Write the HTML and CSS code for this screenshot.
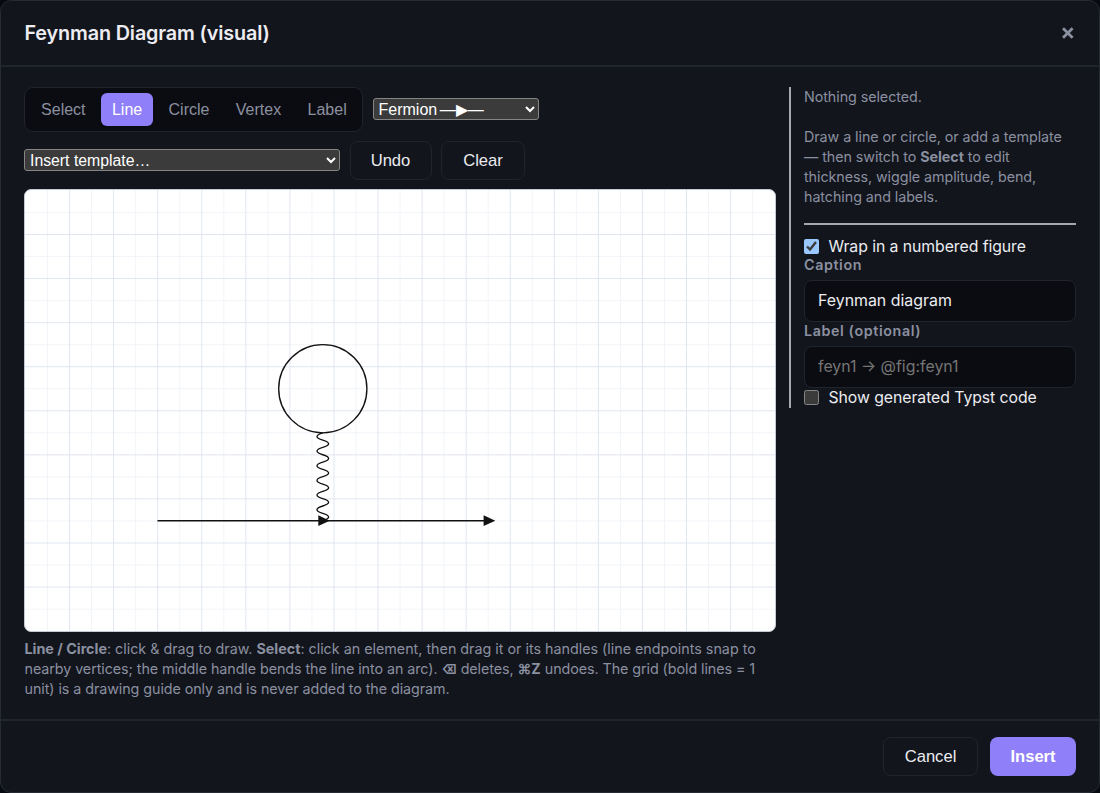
FILE: index.html
```html
<!DOCTYPE html>
<html lang="en">

<head>
    <meta charset="UTF-8">
    <meta name="viewport" content="width=device-width, initial-scale=1.0">
    <link rel="stylesheet" href="styles.css">
    <title>Feynman Diagram (visual)</title>
</head>

<body>
    <div class="modal">
        <header class="modal-header">
            <h2>Feynman Diagram (visual)</h2>
            <button class="close" aria-label="Close">
                <svg width="14" height="14" viewBox="0 0 14 14"><path d="M2 2.2L11.6 11.8M11.6 2.2L2 11.8"/></svg>
            </button>
        </header>

        <div class="modal-body">
            <div class="editor">
                <div class="toolbar">
                    <div class="tools">
                        <button class="tool">Select</button>
                        <button class="tool active">Line</button>
                        <button class="tool">Circle</button>
                        <button class="tool">Vertex</button>
                        <button class="tool">Label</button>
                    </div>
                    <select class="line-type">
                        <option>Fermion —▶—</option>
                    </select>
                </div>
                <div class="toolbar toolbar2">
                    <select class="template">
                        <option>Insert template…</option>
                    </select>
                    <button class="btn undo">Undo</button>
                    <button class="btn clear">Clear</button>
                </div>

                <svg class="canvas" viewBox="25 190 750 441">
                    <g id="grid"></g>
                    <circle class="ink" cx="322.8" cy="388.7" r="44.1"/>
                    <path class="ink" d="M322.8 432.8q-11.6 3.66 0 7.32t0 7.32t0 7.32t0 7.32t0 7.32t0 7.32t0 7.32t0 7.32t0 7.32t0 7.32t0 7.32t0 7.32"/>
                    <path class="ink" d="M157.5 520.7H490"/>
                    <path class="arrow" d="M318.3 515.3L329.7 520.7L318.3 526.1ZM483.6 515.3L495.3 520.7L483.6 526.1Z"/>
                </svg>

                <p class="hint">
                    <span class="first"><b>Line / Circle</b>: click &amp; drag to draw. <b>Select</b>: click an element, then drag it or its handles (line endpoints snap to</span><br>
                    nearby vertices; the middle handle bends the line into an arc). <b class="key">⌫</b> deletes, <b>⌘Z</b> undoes. The grid (bold lines = 1<br>
                    unit) is a drawing guide only and is never added to the diagram.
                </p>
            </div>

            <aside class="side">
                <p class="hint">Nothing selected.</p>
                <p class="hint info">Draw a line or circle, or add a template<br>
                    — then switch to <b>Select</b> to edit<br>
                    thickness, wiggle amplitude, bend,<br>
                    hatching and labels.</p>
                <hr>
                <label class="check"><input type="checkbox" checked> Wrap in a numbered figure</label>
                <label class="field-label" for="caption">Caption</label>
                <input class="field" id="caption" type="text" value="Feynman diagram">
                <label class="field-label" for="label">Label (optional)</label>
                <input class="field" id="label" type="text" placeholder="feyn1 → @fig:feyn1">
                <label class="check code"><input type="checkbox"> Show generated Typst code</label>
            </aside>
        </div>

        <footer class="modal-footer">
            <button class="btn cancel">Cancel</button>
            <button class="btn primary">Insert</button>
        </footer>
    </div>

    <script>
        // Grid lines every half unit, bold on whole units
        const unit = 44.07;
        const grid = document.querySelector('#grid');

        function addLine(d, type) {
            const line = document.createElementNS('http://www.w3.org/2000/svg', 'path');
            line.setAttribute('d', d);
            line.setAttribute('class', type);
            grid.appendChild(line);
        }

        ['minor', 'major'].forEach(type => {
            const offset = type === 'minor' ? -unit / 2 : 0;
            for (let x = 69.55 + offset; x < 774; x += unit) {
                addLine(`M${x} 190V631`, type);
            }
            for (let y = 234.5 + offset; y < 630; y += unit) {
                addLine(`M25 ${y}H775`, type);
            }
        });
    </script>
</body>

</html>
```
FILE: styles.css
```css
* {
    box-sizing: border-box;
}

body {
    margin: 0;
    background-color: #070a0e;
    color: #ececf1;
    color-scheme: dark;
    font-family: Inter, sans-serif;
    font-size: 15.4px;
}

button,
select {
    font-family: "Liberation Sans", Arial, sans-serif;
}

.modal {
    display: flex;
    flex-direction: column;
    height: 793px;
    background-color: #12151c;
    border: 1px solid #252a33;
    border-radius: 11px;
    overflow: hidden;
}

.modal-header {
    display: flex;
    align-items: center;
    justify-content: space-between;
    height: 66px;
    padding: 0 24px 0 23.5px;
    border-bottom: 2px solid #20242d;
}

.modal-header h2 {
    margin: 0;
    font-size: 19.8px;
    font-weight: 600;
    letter-spacing: -0.14px;
}

.close {
    display: flex;
    padding: 0;
    border: none;
    background: none;
}

.close path {
    stroke: #8b90a0;
    stroke-width: 2.8;
    fill: none;
}

.modal-body {
    display: flex;
    gap: 13px;
    height: 653px;
    padding: 20px 23px 0;
}

.editor {
    width: 752px;
}

.toolbar {
    display: flex;
    align-items: center;
    gap: 9.5px;
}

.toolbar2 {
    margin: 9px 0;
}

.tools {
    display: flex;
    gap: 4.2px;
    width: 339px;
    height: 45px;
    padding: 5px;
    background-color: #0b0c11;
    border: 1px solid #20242d;
    border-radius: 9px;
}

.tool {
    padding: 1px 11.1px 0;
    border: none;
    border-radius: 6px;
    background: none;
    color: #8b90a0;
    font-size: 16px;
}

.tool.active {
    background-color: #8f7ff8;
    color: #ffffff;
}

select {
    height: 22px;
    padding: 0 0 0 1px;
    border: 1px solid #858585;
    border-radius: 3px;
    background-color: #3b3b3b;
    color: #ffffff;
    font-size: 16px;
}

.line-type {
    width: 166px;
    word-spacing: -2px;
}

.template {
    width: 316px;
    font-size: 15.8px;
}

.btn {
    height: 39px;
    padding: 2px 0 0;
    border: 1px solid #20242d;
    border-radius: 8px;
    background-color: #12151c;
    color: #ececf1;
    font-size: 16.6px;
}

.undo {
    width: 82px;
}

.clear {
    width: 84px;
}

.canvas {
    display: block;
    width: 752px;
    height: 443px;
    background-color: #ffffff;
    border: 1px solid #c3cad5;
    border-radius: 7px;
}

.minor {
    stroke: #f2f4f9;
    stroke-width: 1;
}

.major {
    stroke: #e0e6f0;
    stroke-width: 1;
}

.ink {
    stroke: #111111;
    stroke-width: 1.35;
    fill: none;
}

.arrow {
    fill: #111111;
}

.hint {
    margin: 0;
    color: #8b90a0;
    font-size: 14.3px;
    line-height: 20px;
    letter-spacing: -0.06px;
    white-space: nowrap;
}

.editor .hint {
    margin-top: 7px;
    padding-left: 0.5px;
}

.hint .first {
    letter-spacing: 0;
}

.hint b {
    font-weight: 700;
}

.hint .key {
    font-size: 12.6px;
    line-height: 1;
}

.side {
    width: 287px;
    height: 321px;
    padding-left: 13px;
    border-left: 2px solid #a5a8b0;
}

.info {
    margin-top: 20px;
}

hr {
    margin: 16px 0 13px;
    border: none;
    border-top: 2px solid #a5a8b0;
}

.check {
    display: flex;
    align-items: center;
    gap: 9.5px;
    height: 18px;
    font-size: 15.8px;
    letter-spacing: -0.06px;
    white-space: nowrap;
}

.check input {
    width: 15px;
    height: 15px;
    margin: 0;
}

.code {
    margin-top: 1px;
}

.field-label {
    display: block;
    height: 24px;
    color: #8b90a0;
    font-size: 14.3px;
    font-weight: 600;
    line-height: 17px;
    letter-spacing: 0.6px;
}

.field {
    display: block;
    width: 100%;
    height: 42px;
    padding: 0 13px;
    border: 1px solid #20242d;
    border-radius: 8px;
    background-color: #0b0c11;
    color: #ececf1;
    font-family: Inter, sans-serif;
    font-size: 15.9px;
}

.field::placeholder {
    color: #757575;
}

.modal-footer {
    display: flex;
    align-items: center;
    justify-content: flex-end;
    gap: 12px;
    height: 73px;
    padding-right: 23px;
    border-top: 2px solid #20242d;
}

.modal-footer .btn {
    padding-top: 0;
}

.cancel {
    width: 95px;
}

.modal-footer .primary {
    width: 86px;
    border: none;
    background-color: #8f7ff8;
    color: #ffffff;
    font-weight: bold;
}
```
